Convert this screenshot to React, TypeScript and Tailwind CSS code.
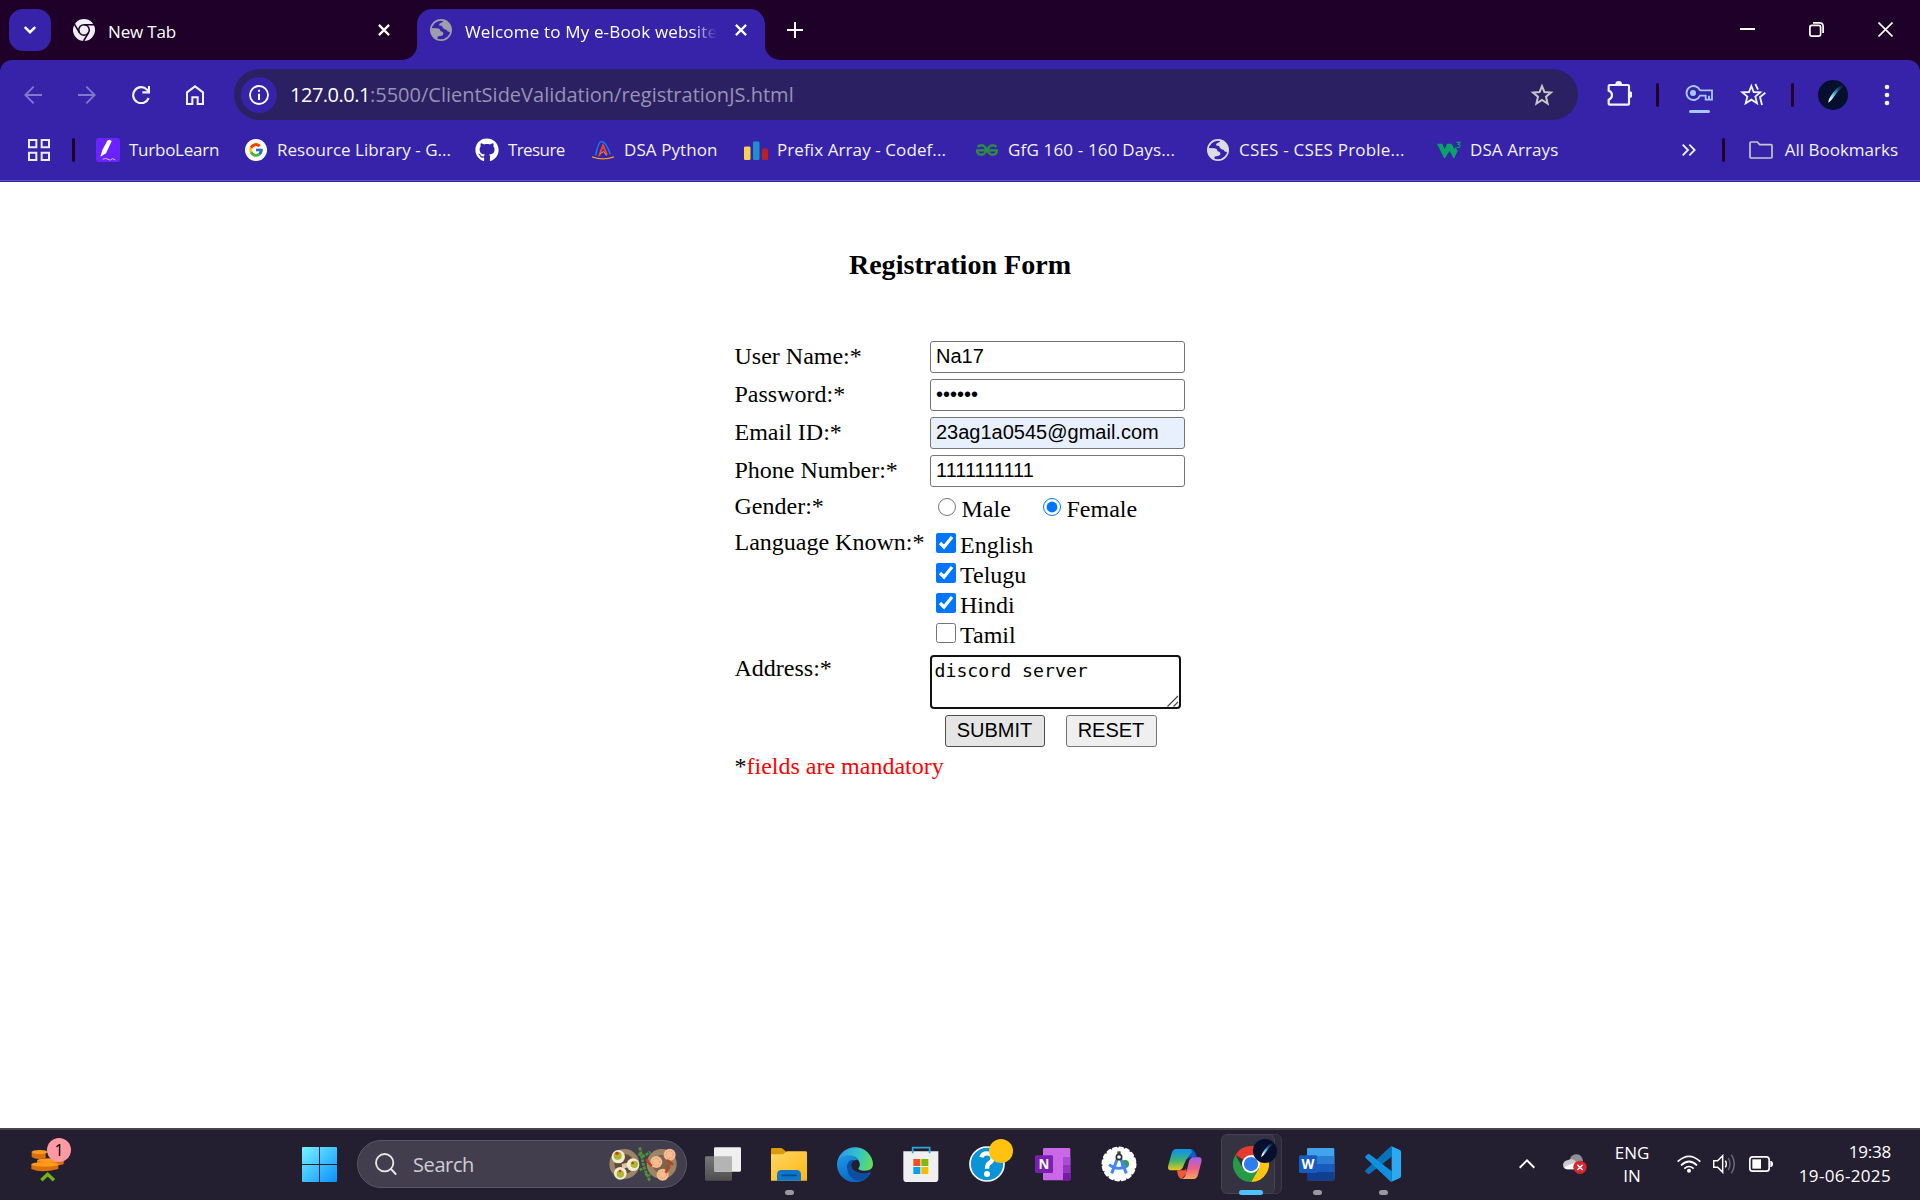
import React from "react";
import { FcGoogle } from "react-icons/fc";
import { FaGithub } from "react-icons/fa";
import { SiGeeksforgeeks } from "react-icons/si";

function Globe({ className }: { className: string }) {
  return (
    <svg viewBox="0 0 64 64" className={"h-[22px] w-[22px] shrink-0 " + className}>
      <circle cx="32" cy="32" r="29.5" fill="none" stroke="currentColor" strokeWidth="5" />
      <path fill="currentColor" d="M4 26 L22 27 Q31 28 30 35 L37 38 Q42 46 34 49 L23 51 Q20 56 22 61 A32 32 0 0 1 4 26Z M38 3 Q40 8 32 11 Q25 13 27 19 L35 20 Q39 31 48 31 Q50 39 61 38 A30 30 0 0 0 38 3Z" />
    </svg>
  );
}

function ChromeMono() {
  return (
    <svg viewBox="0 0 48 48" className="h-[22px] w-[22px]">
      <circle cx="24" cy="24" r="24" fill="#f1eff6" />
      <g stroke="#1f0029" strokeWidth="3.4" fill="none">
        <circle cx="24" cy="24" r="11.5" />
        <path d="M24 12.5H46M14 29.7L3 11M34 29.7L23 48" />
      </g>
    </svg>
  );
}

function ChromeColor() {
  return (
    <svg viewBox="0 0 48 48" className="h-9 w-9">
      <path fill="#e33b2e" d="M24 24 3.2 12A24 24 0 0 1 44.8 12Z" />
      <path fill="#fcc40f" d="M24 12H44.8A24 24 0 0 1 24 48L34.4 30Z" />
      <path fill="#269b47" d="M13.6 30 3.2 12A24 24 0 0 0 24 48L34.4 30Z" />
      <circle cx="24" cy="24" r="12" fill="#fff" />
      <circle cx="24" cy="24" r="9.5" fill="#2f7cf0" />
    </svg>
  );
}

function Comet({ className }: { className: string }) {
  return (
    <svg viewBox="0 0 90 90" className={className}>
      <defs>
        <linearGradient id="tail" x1="0" y1="1" x2="1" y2="0">
          <stop offset="0.15" stopColor="#e8fbff" />
          <stop offset="0.45" stopColor="#4bb4dc" />
          <stop offset="1" stopColor="#0a2a55" stopOpacity="0.2" />
        </linearGradient>
      </defs>
      <circle cx="45" cy="45" r="45" fill="#070f2e" />
      <path d="M31 68 Q30 58 45 38 Q56 22 72 14 L76 20 Q60 30 52 44 Q40 62 31 68Z" fill="url(#tail)" />
    </svg>
  );
}

function CloseX() {
  return (
    <svg viewBox="0 0 12 12" className="h-3 w-3 shrink-0" stroke="#fff" strokeWidth="2.2">
      <path d="M.9.9 11.1 11.1M11.1.9.9 11.1" />
    </svg>
  );
}

function TabStrip() {
  return (
    <div className="flex h-[60px] bg-[#1f0029] text-[17px] text-white">
      <div className="ml-[9px] mt-[9px] flex h-[42px] w-[42px] items-center justify-center rounded-[14px] bg-[#3623a9]">
        <svg viewBox="0 0 12 8" className="h-2 w-3" fill="none" stroke="#fff" strokeWidth="2.4"><path d="M.8 1 6 6.2 11.2 1" /></svg>
      </div>
      <div className="ml-[22px] flex h-[60px] w-[329px] items-center">
        <ChromeMono />
        <span className="ml-[13px] mt-[3px] flex-none whitespace-nowrap tracking-[-0.15px]">New Tab</span>
        <div className="ml-auto mr-[12px]"><CloseX /></div>
      </div>
      <div className="flex w-[378px]">
        <svg viewBox="0 0 15 15" className="mt-[45px] h-[15px] w-[15px]" fill="#3623a9"><path d="M15 0V15H0A15 15 0 0 0 15 0Z" /></svg>
        <div className="mt-[9px] flex h-[51px] w-[348px] items-center rounded-t-[15px] bg-[#3623a9] pb-[9px] pl-[13px]">
          <Globe className="text-[#9d9dab]" />
          <div className="ml-[13px] mt-[3px] w-[252px] overflow-hidden whitespace-nowrap tracking-[0.17px] [mask-image:linear-gradient(to_right,#000_90%,transparent)]">
            Welcome to My e-Book website
          </div>
          <div className="ml-[18px]"><CloseX /></div>
        </div>
        <svg viewBox="0 0 15 15" className="mt-[45px] h-[15px] w-[15px]" fill="#3623a9"><path d="M0 0V15H15A15 15 0 0 1 0 0Z" /></svg>
      </div>
      <svg viewBox="0 0 16 16" className="ml-[7px] mt-[22px] h-4 w-4" stroke="#fff" strokeWidth="2"><path d="M0 8H16M8 0V16" /></svg>
      <div className="ml-auto mr-[27px] mt-[22px] flex gap-[54px]">
        <svg viewBox="0 0 15 15" className="h-[15px] w-[15px]" stroke="#fff" strokeWidth="2"><path d="M0 7H15" /></svg>
        <svg viewBox="0 0 15 15" className="h-[15px] w-[15px]" stroke="#fff" strokeWidth="1.7" fill="none"><rect x=".9" y="3.4" width="10.7" height="10.7" rx="2" /><path d="M4 .9H10.5Q14.1.9 14.1 4.5V11" /></svg>
        <svg viewBox="0 0 15 15" className="h-[15px] w-[15px]" stroke="#fff" strokeWidth="1.6"><path d="M.5.5 14.5 14.5M14.5.5.5 14.5" /></svg>
      </div>
    </div>
  );
}

function Toolbar() {
  return (
    <div className="flex h-[60px] pt-[9px]">
      <div className="flex h-[51px] w-[234px] items-center pl-6">
        <svg viewBox="0 0 54 54" className="h-[18px] w-[18px]" fill="none" stroke="#8379cb" strokeWidth="5.5"><path d="M54 27H4M29 2 4 27 29 52" /></svg>
        <svg viewBox="0 0 54 54" className="ml-9 h-[18px] w-[18px]" fill="none" stroke="#8379cb" strokeWidth="5.5"><path d="M0 27H50M25 2 50 27 25 52" /></svg>
        <svg viewBox="0 0 54 54" className="ml-9 h-[18px] w-[18px]" fill="none" stroke="#f3f1fb" strokeWidth="6.5"><path d="M50 36A24 24 0 1 1 45 11L51 18M51 0V19H31" /></svg>
        <svg viewBox="0 0 54 60" className="ml-9 h-5 w-[18px]" fill="none" stroke="#f3f1fb" strokeWidth="6"><path d="M3 22 27 4 51 22V57H35V37H19V57H3Z" /></svg>
      </div>
      <div className="flex h-[51px] w-[1344px] items-center rounded-full bg-[#2b2162] text-[20px]">
        <div className="ml-[7px] flex h-9 w-9 items-center justify-center rounded-full bg-[#3623a9]">
          <svg viewBox="0 0 60 60" className="h-5 w-5"><circle cx="30" cy="30" r="27" fill="none" stroke="#fff" strokeWidth="5.5" /><path d="M27 26H33V45H27ZM27 14H33V20H27Z" fill="#fff" /></svg>
        </div>
        <span className="ml-[13px] whitespace-nowrap tracking-[-0.49px] text-white">127.0.0.1</span>
        <span className="whitespace-nowrap text-[#9892b5]">:5500/ClientSideValidation/registrationJS.html</span>
        <svg viewBox="0 0 24 24" className="ml-auto mr-6 h-6 w-6" fill="none" stroke="#c7c7c7" strokeWidth="2"><path d="M12 3.2 14.4 9 21 9.5 16 13.7 17.6 20.5 12 16.9 6.4 20.5 8 13.7 3 9.5 9.6 9Z" /></svg>
      </div>
      <div className="flex h-[51px] flex-1 items-center">
        <svg viewBox="0 0 75 75" className="mb-[3px] ml-[29px] h-[25px] w-[25px]"><path d="M8 12H63Q66 12 66 15V68Q66 71 63 71H8Q5 71 5 68V56Q15 52 15 42 15 32 5 29V15Q5 12 8 12Z" fill="none" stroke="#f3f1fb" strokeWidth="6.5" /><path d="M25 10A10 10 0 0 1 45 10ZM67 31A10 10 0 0 1 67 51Z" fill="#f3f1fb" /></svg>
        <div className="ml-6 h-6 w-[3px] rounded-full bg-[#1f0029]" />
        <div className="ml-[26px] mt-[8px] flex h-[29px] w-[28px] flex-col items-center justify-between pt-[1px]">
          <svg viewBox="0 0 84 48" className="h-4 w-7" fill="none" stroke="#a8c7fa" strokeWidth="5.5"><path d="M45 16A21 21 0 1 0 45 32H62V44H72V32M45 16H81V44H60" /><circle cx="24" cy="24" r="9" fill="#a8c7fa" stroke="none" /></svg>
          <div className="h-[3px] w-[21px] rounded-full bg-[#a8c7fa]" />
        </div>
        <svg viewBox="0 0 78 72" className="ml-[27px] h-6 w-[26px]" fill="none" stroke="#f3f1fb" strokeWidth="5.5"><path d="M34 9 41 27 61 28 46 41 51 61 34 50 17 61 22 41 7 28 27 27Z" /><path d="M46 3 54 20M76 29 60 42 66 66" /></svg>
        <div className="ml-[25px] h-6 w-[3px] rounded-full bg-[#1f0029]" />
        <Comet className="ml-6 h-[30px] w-[30px]" />
        <svg viewBox="0 0 6 22" className="ml-9 h-[22px] w-1.5" fill="#f3f1fb"><circle cx="3" cy="3" r="2.3" /><circle cx="3" cy="11" r="2.3" /><circle cx="3" cy="19" r="2.3" /></svg>
      </div>
    </div>
  );
}

function Bookmark({ icon, label, className }: { icon: React.ReactNode; label: string; className: string }) {
  return (
    <div className={"flex items-center " + className}>
      <div className="flex h-6 w-6 shrink-0 items-center justify-center">{icon}</div>
      <span className="ml-[9px] whitespace-nowrap">{label}</span>
    </div>
  );
}

function BookmarksBar() {
  return (
    <div className="flex h-[60px] items-center text-[17px] text-[#f3f1fb]">
      <svg viewBox="0 0 66 66" className="ml-7 h-[22px] w-[22px]" fill="none" stroke="#ecebf6" strokeWidth="6"><path d="M3 3H25V25H3ZM41 3H63V25H41ZM3 41H25V63H3ZM41 41H63V63H41Z" /></svg>
      <div className="ml-[22px] mr-[21px] h-6 w-[3px] rounded-full bg-[#1f0029]" />
      <Bookmark className="w-[148px] tracking-[-0.25px]" label="TurboLearn" icon={
        <svg viewBox="0 0 72 72" className="h-6 w-6"><rect width="72" height="72" rx="8" fill="#6a22ff" /><path d="M13 56 20 34 34 8Q42 2 47 10L30 46Z" fill="#fff" /><path d="M20 64Q30 58 36 64T50 62L58 66" stroke="#fff" strokeWidth="2" fill="none" /></svg>} />
      <Bookmark className="w-[231px] tracking-[0.03px]" label="Resource Library - G..." icon={
        <span className="flex h-[22px] w-[22px] items-center justify-center rounded-full bg-white"><FcGoogle className="h-4 w-4" /></span>} />
      <Bookmark className="w-[116px] tracking-[-0.6px]" label="Tresure" icon={<FaGithub className="h-6 w-6 text-white" />} />
      <Bookmark className="w-[153px] tracking-[0.08px]" label="DSA Python" icon={
        <svg viewBox="0 0 72 62" className="h-[21px] w-6" fill="none"><path d="M14 46Q22 4 31 4 44 2 58 42" stroke="#1677f0" strokeWidth="5" /><path d="M3 50Q36 62 69 50" stroke="#f79a1e" strokeWidth="4" /><path d="M24 48 36 16 48 44" stroke="#ea4a22" strokeWidth="6" /><path d="M28 40 38 34 46 46" stroke="#f7a325" strokeWidth="3" /></svg>} />
      <Bookmark className="w-[231px] tracking-[0.09px]" label="Prefix Array - Codef..." icon={
        <svg viewBox="0 0 24 24" className="h-6 w-6"><rect y="8.500" width="6.5" height="13.5" rx="1.300" fill="#fbd052" /><rect x="9" y="3.500" width="6.5" height="18.5" rx="1.3" fill="#1f8fd0" /><rect x="18" y="10.5" width="6" height="11.5" rx="1.3" fill="#b92024" /></svg>} />
      <Bookmark className="w-[231px] tracking-[0.16px]" label="GfG 160 - 160 Days..." icon={<SiGeeksforgeeks className="h-[22px] w-[22px] stroke-[#2f8d46] stroke-[0.6] text-[#2f8d46]" />} />
      <Bookmark className="w-[231px] tracking-[0.2px]" label="CSES - CSES Proble..." icon={<Globe className="text-[#dcdce6]" />} />
      <Bookmark className="w-[124px] tracking-[0.08px]" label="DSA Arrays" icon={
        <svg viewBox="0 0 72 54" className="h-[18px] w-6"><path d="M0 8H16L23 24 30 8H44L52 24 56 18 62 30 52 51H49L38 30 24 51H21Z" fill="#0aa267" /><path d="M59 4H69L64 10Q70 11 69 16 67 22 59 18" stroke="#0aa267" strokeWidth="3.5" fill="none" /></svg>} />
      <svg viewBox="0 0 42 36" className="ml-auto mr-[26px] h-3 w-3.5" fill="none" stroke="#f3f1fb" strokeWidth="5.5"><path d="M2 2 18 18 2 34M22 2 38 18 22 34" /></svg>
      <div className="mr-6 h-6 w-[3px] rounded-full bg-[#1f0029]" />
      <svg viewBox="0 0 72 54" className="h-[18px] w-6" fill="none" stroke="#c7c7c7" strokeWidth="5"><path d="M6 3H25L32 11H66Q69 11 69 14V48Q69 51 66 51H6Q3 51 3 48V6Q3 3 6 3Z" /></svg>
      <span className="ml-3 mr-[22px] whitespace-nowrap">All Bookmarks</span>
    </div>
  );
}

function Field({ label, value, type = "text", className = "bg-white" }: { label: string; value: string; type?: string; className?: string }) {
  return (
    <div className="mb-1.5 flex h-8 items-center">
      <label className="w-[195px] pb-[2px] leading-[27px]">{label}</label>
      <input type={type} defaultValue={value} className={"h-8 w-[255px] rounded-[3px] border border-[#767676] pb-[2px] pl-[5.5px] font-['Liberation_Sans',Arial,sans-serif] text-[20px] " + className} />
    </div>
  );
}

function Language({ name, checked }: { name: string; checked: boolean }) {
  return (
    <div className="flex h-[30px] items-start">
      <input type="checkbox" defaultChecked={checked} className="ml-1.5 h-5 w-5" />
      <span className="ml-[4.5px] mt-[-3px] leading-[30px]">{name}</span>
    </div>
  );
}

function RegistrationPage() {
  return (
    <div className="flex h-[946px] flex-col bg-white font-['Liberation_Serif','Times_New_Roman',serif] text-[24px] text-black">
      <h3 className="mt-[67px] text-center text-[28.08px] font-bold leading-8">Registration Form</h3>
      <form className="ml-[734.5px] mt-[60px] w-[460px]">
        <Field label="User Name:*" value="Na17" />
        <Field label="Password:*" value="abcdef" type="password" />
        <Field label="Email ID:*" value="23ag1a0545@gmail.com" className="bg-[#e8f0fe]" />
        <Field label="Phone Number:*" value="1111111111" />
        <div className="flex h-[40px]">
          <span className="w-[195px] leading-[27px]">Gender:*</span>
          <input type="radio" name="gender" className="ml-[8px] mt-[5px] h-[18px] w-[18px]" />
          <span className="ml-1.5 mt-[3px] w-[75px] leading-[27px]">Male</span>
          <input type="radio" name="gender" defaultChecked className="ml-1.5 mt-[5px] h-[18px] w-[18px]" />
          <span className="ml-1.5 mt-[3px] leading-[27px]">Female</span>
        </div>
        <div className="flex h-[122px]">
          <span className="w-[195px] whitespace-nowrap leading-[18px]">Language Known:*</span>
          <div>
            <Language name="English" checked />
            <Language name="Telugu" checked />
            <Language name="Hindi" checked />
            <Language name="Tamil" checked={false} />
          </div>
        </div>
        <div className="flex h-[60px]">
          <span className="w-[195px] leading-[27px]">Address:*</span>
          <div className="relative h-[54px] w-[251px]">
            <textarea defaultValue="discord server" className="h-[54px] w-[251px] resize-none overflow-hidden rounded-[4px] border-2 border-[#101010] px-[3px] pt-[2px] font-['DejaVu_Sans_Mono',monospace] text-[18.2px] leading-6 outline-none" />
            <svg viewBox="0 0 12 12" className="absolute bottom-[2px] right-[2px] h-3 w-3" stroke="#444" strokeWidth="1.2"><path d="M.5 11.5 11 1M6.5 11.5 11 7" /></svg>
          </div>
        </div>
        <div className="flex h-8 pl-[210px] font-['Liberation_Sans',Arial,sans-serif] text-[20px]">
          <button type="button" className="h-8 w-[100px] rounded-[3px] border border-[#4f4f4f] bg-[#e5e5e5] pb-[2px] leading-[27px]">SUBMIT</button>
          <button type="button" className="ml-[21px] h-8 w-[91px] rounded-[3px] border border-[#767676] bg-[#efefef] pb-[2px] leading-[27px]">RESET</button>
        </div>
        <p className="mt-[6px] leading-[27px]">*<span className="text-[#ff0000]">fields are mandatory</span></p>
      </form>
    </div>
  );
}

function Slot({ children, mark = "" }: { children: React.ReactNode; mark?: string }) {
  return (
    <div className="relative flex h-[70px] w-[66px] items-center justify-center pb-[2px]">
      {children}
      {mark && <div className={"absolute bottom-[5px] h-[5px] rounded-full " + mark} />}
    </div>
  );
}

function OfficeTile({ letter, back, bands, front }: { letter: string; back: string; bands: React.ReactNode; front: string }) {
  return (
    <svg viewBox="0 0 108 108" className="h-9 w-9">
      <rect x="24" y="6" width="82" height="97" rx="4" fill={back} />
      {bands}
      <rect y="28" width="54" height="53" rx="4" fill={front} />
      <text x="27" y="69" textAnchor="middle" fill="#fff" fontSize="40" fontWeight="700" fontFamily="Open Sans, sans-serif">{letter}</text>
    </svg>
  );
}

function Taskbar() {
  return (
    <div className="flex h-[72px] border-t-2 border-[#47454f] bg-[#231f31] font-['Open_Sans',sans-serif]">
      <div className="relative ml-[31px] mt-[17px] h-[36px] w-[36px]">
        <svg viewBox="0 0 108 108" className="h-9 w-9">
          <g fill="#d9700c"><path d="M2 14V30Q16 40 44 34V12ZM18 42V56Q60 64 98 52V36ZM1 52V66Q30 80 82 66V52Z" /></g>
          <g fill="#fb9a1c"><ellipse cx="26" cy="15" rx="24" ry="6" /><ellipse cx="56" cy="40" rx="38" ry="6" /><ellipse cx="42" cy="52" rx="41" ry="7" /></g>
          <path d="M31 100 50 82 69 100" stroke="#6fb51a" strokeWidth="10" fill="none" />
        </svg>
        <div className="absolute -top-[9px] left-[16px] flex h-6 w-6 items-center justify-center rounded-full bg-[#ff99a4] text-[16px] text-black">1</div>
      </div>
      <svg viewBox="0 0 105 105" className="ml-[235px] mt-[17px] h-[35px] w-[35px]">
        <defs><linearGradient id="win" x1="0" y1="0" x2="1" y2="1"><stop stopColor="#76f3ff" /><stop offset="1" stopColor="#0a90ff" /></linearGradient></defs>
        <path d="M3 0H51V51H0V3Q0 0 3 0ZM54 0H102Q105 0 105 3V51H54ZM0 54H51V105H3Q0 105 0 102ZM54 54H105V102Q105 105 102 105H54Z" fill="url(#win)" />
      </svg>
      <div className="ml-5 mt-[10px] flex h-12 w-[330px] items-center rounded-full border border-[#5a5766] bg-[#423e4e]">
        <svg viewBox="0 0 66 66" className="ml-[17px] h-[22px] w-[22px]" fill="none" stroke="#e8e7ec" strokeWidth="5.5" strokeLinecap="round"><circle cx="29" cy="29" r="26" /><path d="M48 48 62 63" /></svg>
        <span className="ml-4 mt-[2px] text-[20px] tracking-[-0.4px] text-[#cfcdd5]">Search</span>
        <svg viewBox="0 0 204 108" className="ml-auto mr-[9px] h-9 w-[68px]">
          <circle cx="46" cy="54" r="45" fill="#9c8567" /><circle cx="46" cy="54" r="30" fill="#5c4c3c" />
          <circle cx="158" cy="54" r="45" fill="#9c8567" /><circle cx="158" cy="54" r="28" fill="#7a654d" />
          <path d="M38 54 54 50 60 62 40 70Z" fill="#d9c7a4" />
          <g fill="#f4ead2"><circle cx="28" cy="32" r="20" /><circle cx="72" cy="56" r="19" /><circle cx="34" cy="82" r="19" /></g>
          <g fill="#a9b82d"><circle cx="26" cy="29" r="12" /><circle cx="76" cy="55" r="11" /><circle cx="34" cy="84" r="11" /></g>
          <g fill="#d9361c"><circle cx="24" cy="22" r="5" /><circle cx="71" cy="51" r="4" /><circle cx="33" cy="75" r="4" /></g>
          <path d="M92 4Q98 30 102 50T122 104M88 24 104 30 124 18M92 72 106 66M108 84 124 88" stroke="#4d9636" strokeWidth="8" fill="none" strokeDasharray="9 3" />
          <g fill="#f8bd93"><circle cx="142" cy="48" r="18" /><circle cx="182" cy="26" r="18" /><circle cx="161" cy="86" r="18" /></g>
          <g fill="none" stroke="#df7d4b" strokeWidth="3"><circle cx="142" cy="48" r="11" strokeDasharray="3 5" /><circle cx="182" cy="26" r="11" strokeDasharray="3 5" /><circle cx="161" cy="86" r="11" strokeDasharray="3 5" /></g>
          <path d="M113 42 126 58M176 60 172 78M176 44 190 54" stroke="#b9441c" strokeWidth="8" strokeLinecap="round" />
        </svg>
      </div>
      <div className="ml-[3px] flex">
        <Slot>
          <svg viewBox="0 0 108 108" className="h-9 w-9">
            <defs><linearGradient id="tv" x1="0" y1="0" x2="0" y2="1"><stop stopColor="#777" /><stop offset="1" stopColor="#4f4f4f" /></linearGradient></defs>
            <rect y="31" width="81" height="73" rx="4" fill="url(#tv)" /><rect x="27" y="4" width="81" height="73" rx="4" fill="#f0f0f0" /><path d="M27 31H81V77H31Q27 77 27 73Z" fill="#b4b4b4" />
          </svg>
        </Slot>
        <Slot mark="w-[9px] bg-[#9a98a1]">
          <svg viewBox="0 0 108 108" className="h-9 w-9">
            <defs><linearGradient id="fo" x1="0" y1="0" x2="1" y2="1"><stop stopColor="#ffd766" /><stop offset="1" stopColor="#fcb713" /></linearGradient></defs>
            <path d="M0 10Q0 6 4 6H32L46 17V30H0Z" fill="#dd9c07" /><path d="M0 25H36L48 16H104Q108 16 108 20V104H0Z" fill="url(#fo)" /><path d="M18 104V86Q18 72 32 72H76Q90 72 90 86V104Z" fill="#0f77c9" /><path d="M33 88H75" stroke="#084d91" strokeWidth="5" strokeLinecap="round" />
          </svg>
        </Slot>
        <Slot>
          <svg viewBox="0 0 108 108" className="h-9 w-9">
            <defs>
              <linearGradient id="e1" x1="0" y1="0.3" x2="1" y2="0.5"><stop stopColor="#2f9de6" /><stop offset="0.5" stopColor="#34c6c8" /><stop offset="1" stopColor="#66e04c" /></linearGradient>
              <linearGradient id="e2" x1="0" y1="0" x2="0.5" y2="1"><stop stopColor="#1e9be6" /><stop offset="1" stopColor="#0a63c8" /></linearGradient>
              <linearGradient id="e3" gradientUnits="userSpaceOnUse" x1="10" y1="30" x2="108" y2="60"><stop stopColor="#2f9de6" /><stop offset="0.5" stopColor="#34c6c8" /><stop offset="1" stopColor="#66e04c" /></linearGradient>
            </defs>
            <path d="M0 50Q6 24 34 26 56 28 62 42 44 40 42 56 42 74 66 80 84 86 98 79 103 80 98 86A54 54 0 0 1 0 50Z" fill="url(#e2)" />
            <path d="M42 42Q28 50 30 68 36 100 64 104 84 102 98 86 103 80 98 79 84 86 66 80 42 74 42 56 44 44 56 42Z" fill="#0c4fa0" />
            <path d="M1 48A54 54 0 0 1 108 54Q108 74 84 74 68 74 64 68 72 58 66 46 56 26 30 28 10 30 1 48Z" fill="url(#e3)" />
          </svg>
        </Slot>
        <Slot>
          <svg viewBox="0 0 108 108" className="h-9 w-9">
            <path d="M29 22V5H80V22" fill="none" stroke="#25a9e0" strokeWidth="5" />
            <path d="M1 16H106V98Q106 108 96 108H11Q1 108 1 98Z" fill="#f0f0f0" /><path d="M29 22V14M80 22V14" stroke="#25a9e0" strokeWidth="5" />
            <path d="M31 39H52V60H31Z" fill="#f25022" /><path d="M55 39H76V60H55Z" fill="#7fba00" /><path d="M31 63H52V84H31Z" fill="#00a4ef" /><path d="M55 63H76V84H55Z" fill="#ffb900" />
          </svg>
        </Slot>
        <Slot>
          <svg viewBox="0 0 108 108" className="h-9 w-9"><circle cx="54" cy="54" r="51" fill="#0a93d6" stroke="#fff" strokeWidth="5" /><path d="M37 34Q40 22 54 22 70 22 71 36 71 45 61 51 54 56 54 68" stroke="#fff" strokeWidth="13" fill="none" /><circle cx="54" cy="84" r="9" fill="#fff" /></svg>
          <div className="absolute left-[35px] top-[9px] h-6 w-6 rounded-full bg-[#ffc20e]" />
        </Slot>
        <Slot><OfficeTile letter="N" back="#cb68e8" front="#7a1fb0" bands={<><path d="M84 33H106V57H84Z" fill="#ad4bd6" /><path d="M84 57H106V80H84Z" fill="#9335c0" /><path d="M84 80H106V103H84Z" fill="#7719aa" /></>} /></Slot>
        <Slot>
          <svg viewBox="0 0 108 108" className="h-9 w-9">
            <circle cx="54" cy="54" r="49" fill="#fff" /><circle cx="54" cy="54" r="49" fill="none" stroke="#fff" strokeWidth="7" strokeDasharray="10 9.24" strokeLinecap="round" />
            <circle cx="72" cy="54" r="12" fill="#2f9e4f" /><path d="M50 36 32 82M58 36 76 82" stroke="#4285f4" strokeWidth="9" /><path d="M24 56Q50 76 76 60" stroke="#4285f4" strokeWidth="8" fill="none" />
            <path d="M49 16H59V28H49Z" fill="#444" /><circle cx="54" cy="33" r="8" fill="#fff" stroke="#333" strokeWidth="5" />
          </svg>
        </Slot>
        <Slot>
          <svg viewBox="0 0 108 108" className="h-9 w-9">
            <defs>
              <linearGradient id="c1" x1="0" y1="0" x2="0" y2="1"><stop offset="0.1" stopColor="#1495e0" /><stop offset="0.55" stopColor="#3fb56f" /><stop offset="1" stopColor="#f2c417" /></linearGradient>
              <linearGradient id="c2" x1="0" y1="0" x2="0" y2="1"><stop stopColor="#a25ff0" /><stop offset="0.5" stopColor="#e8608a" /><stop offset="1" stopColor="#ffa35c" /></linearGradient>
            </defs>
            <path d="M60 10H74Q82 12 86 24L90 34H72Q64 34 60 46L54 34Z" fill="#1459c9" />
            <path d="M26 9H66Q76 9 74 20 58 34 48 64 44 73 34 73H10Q0 72 4 58L14 22Q18 10 26 9Z" fill="url(#c1)" />
            <path d="M30 73H44Q52 70 55 60L60 80 44 99Q36 98 32 84Z" fill="#f2583e" />
            <path d="M78 34H98Q106 36 103 48L93 86Q89 99 80 99H44Q54 96 58 80L66 46Q70 35 78 34Z" fill="url(#c2)" />
            <path d="M60 38H68L54 73H45Z" fill="#231f31" />
          </svg>
        </Slot>
        <div className="relative flex h-[70px] w-[66px] items-center justify-center pb-[2px]">
          <div className="absolute left-[4px] top-[4px] h-[60px] w-[60px] rounded-[6px] border border-[#3c3949] bg-[#2c2939]" />
          <div className="absolute left-[3px] top-[4px] h-[60px] w-[54px] rounded-[6px] border border-[#454252] bg-[#353242]" />
          <div className="relative"><ChromeColor /></div>
          <Comet className="absolute left-[35px] top-[9px] h-6 w-6" />
          <div className="absolute bottom-[5px] h-[5px] w-6 rounded-full bg-[#4cc2ff]" />
        </div>
        <Slot mark="w-[9px] bg-[#9a98a1]"><OfficeTile letter="W" back="#41a5ee" front="#185abd" bands={<><path d="M24 30H106V54H24Z" fill="#2b7cd3" /><path d="M24 54H106V78H24Z" fill="#185abd" /><path d="M24 78H106V103H24Z" fill="#103f91" /></>} /></Slot>
        <Slot mark="w-[9px] bg-[#9a98a1]">
          <svg viewBox="0 0 108 108" className="h-9 w-9">
            <path d="M2 72Q-1 75 2 78L8 83Q11 85 14 83L80 32V2Q78 0 74 4Z" fill="#0a72bd" /><path d="M2 36Q-1 33 2 30L8 25Q11 23 14 25L80 76V106Q78 108 74 104Z" fill="#1191dd" /><path d="M78 0 105 12Q108 14 108 17V91Q108 94 105 96L78 108Q80 106 80 102V6Q80 2 78 0Z" fill="#29aaf2" />
          </svg>
        </Slot>
      </div>
      <div className="ml-auto mr-[29px] flex h-[68px] items-center text-white">
        <svg viewBox="0 0 16 10" className="mr-7 h-2.5 w-4" fill="none" stroke="#fff" strokeWidth="2"><path d="M.7 8.7 8 1.4 15.3 8.7" /></svg>
        <svg viewBox="0 0 72 60" className="mr-[27px] h-5 w-6"><path d="M22 12Q28 0 42 1 56 2 60 20L40 32 22 20Z" fill="#8f8f98" /><path d="M12 46Q0 44 0 32 2 20 16 18 30 10 42 26L50 46Z" fill="#c9c9ce" /><path d="M4 38 32 28 40 46H12Q6 44 4 38Z" fill="#fff" /><circle cx="51" cy="40" r="20" fill="#d9252e" /><path d="M43 32 59 48M59 32 43 48" stroke="#fff" strokeWidth="4.5" /></svg>
        <div className="flex w-9 flex-col items-center text-[17px] leading-[23px]"><span>ENG</span><span>IN</span></div>
        <svg viewBox="0 0 72 54" className="ml-[27px] h-[18px] w-6" fill="none" stroke="#fff" strokeWidth="5"><path d="M2 20Q36-12 70 20M12 31Q36 8 60 31M22 41Q36 28 50 41" /><circle cx="36" cy="47" r="6" fill="#fff" stroke="none" /></svg>
        <svg viewBox="0 0 72 60" className="ml-3 h-5 w-6" fill="none" stroke="#fff" strokeWidth="4.5"><path d="M2 20H14L29 5V55L14 40H2ZM37 20Q43 30 37 40" /><path d="M46 12Q56 30 46 48M55 2Q73 30 55 58" stroke="#6a6775" /></svg>
        <svg viewBox="0 0 72 48" className="ml-3 h-4 w-6"><rect x="2.5" y="2.5" width="58" height="43" rx="9" fill="none" stroke="#fff" strokeWidth="5" /><path d="M10 10H36V38H10Z" fill="#fff" /><path d="M64 15H67Q72 16 72 24T67 33H64Z" fill="#fff" /></svg>
        <div className="ml-[25px] flex w-[93px] flex-col items-end text-[17px] leading-6"><span className="tracking-[-0.2px]">19:38</span><span className="whitespace-nowrap tracking-[0.35px]">19-06-2025</span></div>
      </div>
    </div>
  );
}

export default function App() {
  return (
    <div className="h-[1200px] w-[1920px] overflow-hidden bg-[#1f0029] font-['Open_Sans',sans-serif]">
      <TabStrip />
      <div className="h-[122px] rounded-t-[12px] bg-[#3623a9]">
        <Toolbar />
        <BookmarksBar />
        <div className="h-px bg-[#5f50bb]" />
      </div>
      <RegistrationPage />
      <Taskbar />
    </div>
  );
}
